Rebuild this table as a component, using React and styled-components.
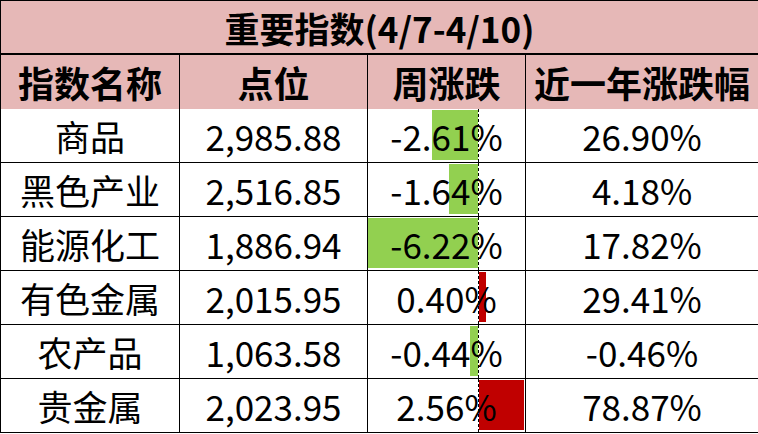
import React from "react";
import styled, { createGlobalStyle } from "styled-components";

const GlobalStyle = createGlobalStyle`
  body {
    margin: 0;
    background: #fff;
    font-family: "Noto Sans CJK SC", "Noto Sans", sans-serif;
  }
`;

const Table = styled.div`
  width: 758px;
  display: grid;
  grid-template-columns: 178px 187px 157px 232px;
  grid-auto-rows: 53px;
  gap: 1px;
  background: #000;
  border: 1px solid #000;
  box-sizing: border-box;
`;

const Title = styled.div`
  grid-column: 1 / -1;
  height: 52px;
  background: #e6b8b7;
  display: flex;
  align-items: center;
  justify-content: center;
  font-size: 35px;
  font-weight: 700;
  color: #000;
`;

const Cell = styled.div`
  position: relative;
  display: flex;
  align-items: center;
  justify-content: center;
  background: ${props => (props.head ? "#e6b8b7" : "#fff")};
  height: ${props => (props.head ? "54px" : "53px")};
  font-size: ${props => (props.head ? "36px" : "35px")};
  font-weight: ${props => (props.head ? 700 : 400)};
  color: #000;
  white-space: nowrap;
  overflow: hidden;
`;

const Axis = styled.div`
  position: absolute;
  left: 110px;
  top: 0;
  bottom: 0;
  border-left: 1px dashed #000;
`;

const Bar = styled.div`
  position: absolute;
  top: 1px;
  bottom: 2px;
  background: ${props => (props.up ? "#c00000" : "#92d050")};
`;

const Label = styled.span`
  position: relative;
`;

const rows = [
  ["商品", "2,985.88", -2.61, "26.90%"],
  ["黑色产业", "2,516.85", -1.64, "4.18%"],
  ["能源化工", "1,886.94", -6.22, "17.82%"],
  ["有色金属", "2,015.95", 0.4, "29.41%"],
  ["农产品", "1,063.58", -0.44, "-0.46%"],
  ["贵金属", "2,023.95", 2.56, "78.87%"]
];

const SCALE = 17.7;

function App() {
  return (
    <>
      <GlobalStyle />
      <Table>
        <Title>重要指数(4/7-4/10)</Title>
        <Cell head>指数名称</Cell>
        <Cell head>点位</Cell>
        <Cell head>周涨跌</Cell>
        <Cell head>近一年涨跌幅</Cell>
        {rows.map(([name, point, week, year]) => {
          const w = Math.abs(week) * SCALE;
          const up = week > 0;
          return (
            <React.Fragment key={name}>
              <Cell>{name}</Cell>
              <Cell>{point}</Cell>
              <Cell>
                <Bar
                  up={up}
                  style={up ? { left: 111, width: w } : { left: 110 - w, width: w }}
                />
                <Axis />
                <Label>{week.toFixed(2)}%</Label>
              </Cell>
              <Cell>{year}</Cell>
            </React.Fragment>
          );
        })}
      </Table>
    </>
  );
}

export default App;
